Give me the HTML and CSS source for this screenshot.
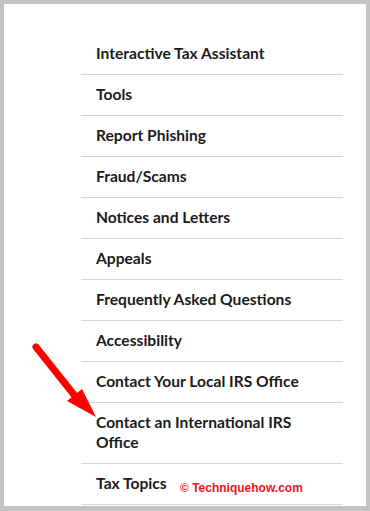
FILE: index.html
```html
<!DOCTYPE html>
<html lang="en">
  <head>
    <meta charset="UTF-8" />
    <title>IRS Help Menu</title>
    <link rel="stylesheet" href="styles.css">
  </head>
  <body>
    <div class="frame">
      <ul class="menu">
        <li><a href="#">Interactive Tax Assistant</a></li>
        <li><a href="#">Tools</a></li>
        <li><a href="#">Report Phishing</a></li>
        <li><a href="#">Fraud/Scams</a></li>
        <li><a href="#">Notices and Letters</a></li>
        <li><a href="#">Appeals</a></li>
        <li><a href="#">Frequently Asked Questions</a></li>
        <li><a href="#">Accessibility</a></li>
        <li><a href="#">Contact Your Local IRS Office</a></li>
        <li><a href="#">Contact an International IRS Office</a></li>
        <li><a href="#">Tax Topics</a></li>
      </ul>

      <!-- annotation arrow -->
      <svg class="arrow" width="80" height="90" viewBox="0 0 80 90">
        <line x1="11" y1="12" x2="54" y2="66" stroke="#f00" stroke-width="7" stroke-linecap="round" />
        <polygon points="42,66 57,54 71,82" fill="#f00" />
      </svg>

      <div class="watermark">&copy; Techniquehow.com</div>
    </div>
  </body>
</html>
```

FILE: styles.css
```css
body {
  margin: 0;
  background-color: #c3c3c3;
  font-family: "Lato", sans-serif;
}
.frame {
  position: relative;
  margin: 4px 4px 0 4px;
  height: 502px;
  background: white;
  overflow: hidden;
}
.menu {
  list-style: none;
  margin: 0;
  padding: 30px 0 0 77px;
  width: 262px;
}
.menu li {
  border-bottom: 1px solid #d6d6d6;
  padding: 9px 15px 11px 15px;
}
.menu a {
  display: block;
  color: #1b1b1b;
  text-decoration: none;
  font-weight: 700;
  font-size: 15.6px;
  line-height: 20px;
  width: 232px;
}
.arrow {
  position: absolute;
  left: 21px;
  top: 331px;
}
.watermark {
  position: absolute;
  left: 176px;
  top: 477px;
  color: #f0141e;
  font-family: "Liberation Sans", sans-serif;
  font-size: 12px;
  font-weight: 700;
}
```
